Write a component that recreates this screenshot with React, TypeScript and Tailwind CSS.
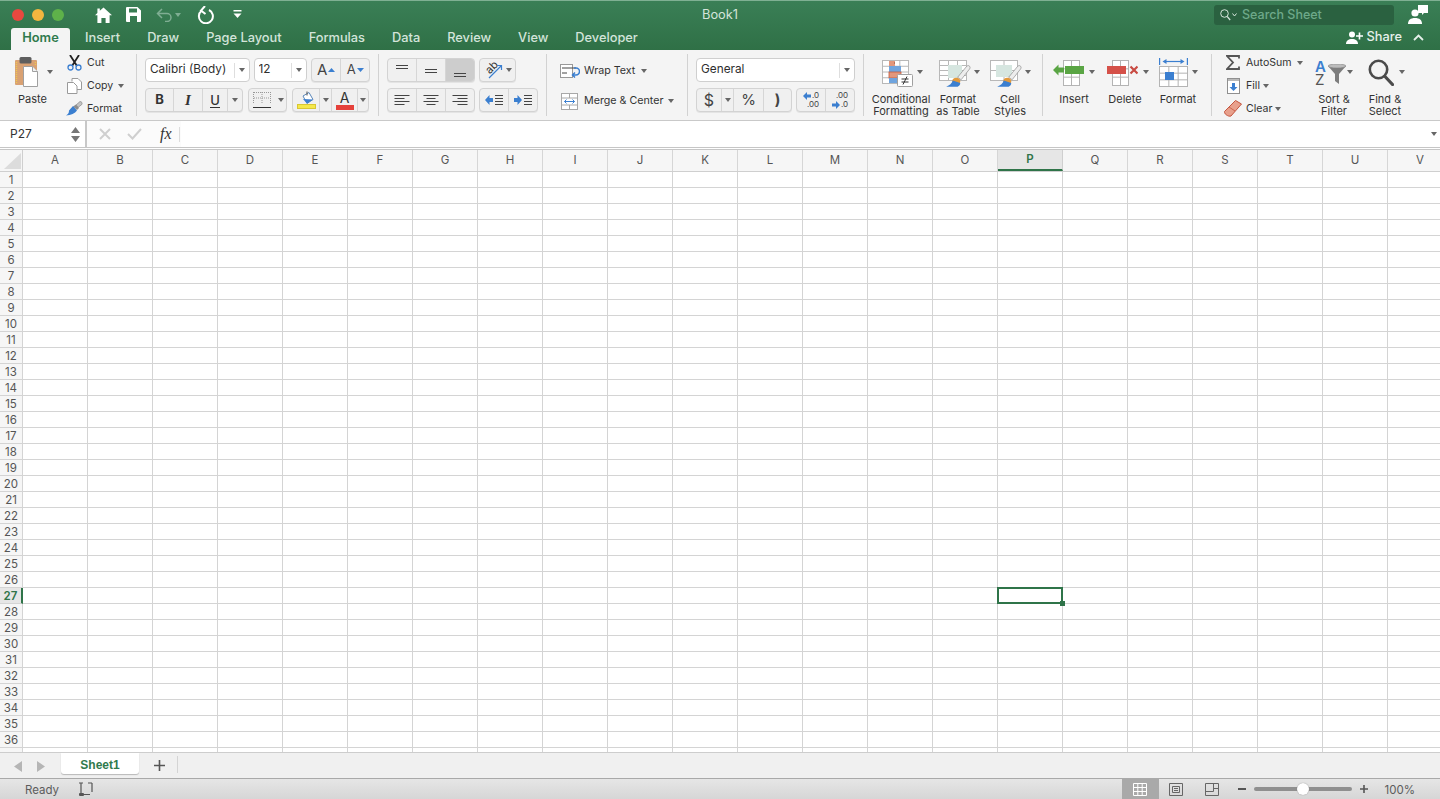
import type { ReactNode } from 'react';

const COLS = 'ABCDEFGHIJKLMNOPQRSTUV'.split('');
const ROWS = Array.from({ length: 37 }, (_, i) => i + 1);
const TABS = ['Insert', 'Draw', 'Page Layout', 'Formulas', 'Data', 'Review', 'View', 'Developer'];
const BLUE = '#3b7fd0';

function Caret({ className = '', color = '#666' }: { className?: string; color?: string }) {
  return (
    <svg className={`shrink-0 ${className}`} width="6" height="4" viewBox="0 0 6 4">
      <path d="M0 0h6L3 4z" fill={color} />
    </svg>
  );
}

function Sep() {
  return <div className="mt-1 h-[62px] w-px shrink-0 bg-[#d2d2d2]" />;
}

function Seg({ children, className = '' }: { children: ReactNode; className?: string }) {
  return (
    <div className={`flex h-6 items-stretch overflow-hidden rounded-[4px] border border-[#d3d3d3] bg-[#f0f0f0] shadow-[0_1px_0_#e4e4e4] divide-x divide-[#d6d6d6] ${className}`}>
      {children}
    </div>
  );
}

function Cell({ children, className = '' }: { children?: ReactNode; className?: string }) {
  return <div className={`flex items-center justify-center ${className}`}>{children}</div>;
}

function Select({ label, className = '' }: { label: string; className?: string }) {
  return (
    <div className={`flex h-6 items-center rounded-[4px] border border-[#cfcfcf] bg-white pl-[4px] text-[11.800px] text-[#2e2e2e] ${className}`}>
      <span className="mb-px flex-1 truncate">{label}</span>
      <span className="h-[15px] w-px bg-[#dedede]" />
      <Caret className="mx-[4px]" />
    </div>
  );
}

function BigButton({ icon, iconClass = '', lines, className = '' }: { icon: ReactNode; iconClass?: string; lines: string[]; className?: string }) {
  return (
    <div className={`flex shrink-0 flex-col items-center pt-[6px] text-[11px] leading-[12px] text-[#333] ${className}`}>
      <div className="flex h-[37px] items-start justify-center gap-[3px]">
        <div className={iconClass}>{icon}</div>
        <Caret className="mt-[14px]" />
      </div>
      {lines.map((l) => (
        <span key={l} className="whitespace-nowrap">{l}</span>
      ))}
    </div>
  );
}

function SmallRow({ icon, label, caretClass }: { icon: ReactNode; label: string; caretClass?: string }) {
  return (
    <div className="flex h-[23px] items-center text-[10.600px] text-[#333]">
      <span className="flex w-[20px] shrink-0 justify-center">{icon}</span>
      <span className="ml-[3px] whitespace-nowrap">{label}</span>
      {caretClass && <Caret className={caretClass} />}
    </div>
  );
}

function LinesIcon({ align }: { align: 'l' | 'c' | 'r' }) {
  return (
    <svg width="16" height="14" viewBox="0 0 16 14">
      {[2, 5, 8, 11].map((y, i) => {
        const w = i % 2 === 0 ? 15 : align === 'c' ? 9 : 10;
        const x = align === 'l' ? 0.5 : align === 'c' ? (16 - w) / 2 : 15.5 - w;
        return <rect key={y} x={x} y={y} width={w} height="1" fill="#444" />;
      })}
    </svg>
  );
}

function VAlign({ top }: { top: number }) {
  return (
    <svg width="14" height="16" viewBox="0 0 14 16">
      <rect x="1" y={top} width="12" height="1" fill="#444" />
      <rect x="1" y={top + 3} width="12" height="1" fill="#444" />
    </svg>
  );
}

function IndentIcon({ flip }: { flip?: boolean }) {
  return (
    <svg width="18" height="12" viewBox="0 0 18 12">
      {flip ? <path d="M0 4h3.500V1L8 6l-4.500 5V8H0z" fill={BLUE} /> : <path d="M8 4H4.500V1L0 6l4.500 5V8H8z" fill={BLUE} />}
      {[1, 4, 7, 10].map((y) => (
        <rect key={y} x="10" y={y} width="8" height="1" fill="#444" />
      ))}
    </svg>
  );
}

function MiniGrid({ w, h, cols, rows, stroke = '#b8b8b8', x = 0, y = 0 }: { w: number; h: number; cols: number; rows: number; stroke?: string; x?: number; y?: number }) {
  const v = Array.from({ length: cols + 1 }, (_, i) => x + 0.5 + ((w - 1) * i) / cols);
  const hz = Array.from({ length: rows + 1 }, (_, i) => y + 0.5 + ((h - 1) * i) / rows);
  return (
    <g stroke={stroke} strokeWidth="1" fill="none">
      <rect x={x + 0.5} y={y + 0.5} width={w - 1} height={h - 1} fill="#fff" />
      {v.map((p) => <path key={p} d={`M${p} ${y}v${h}`} />)}
      {hz.map((p) => <path key={p} d={`M${x} ${p}h${w}`} />)}
    </g>
  );
}

function PasteIcon() {
  return (
    <svg width="24" height="30" viewBox="0 0 24 30">
      <rect x="0" y="3" width="22" height="25" rx="1" fill="#d9a173" />
      <path d="M1.500 5v21M20.500 5v4" stroke="#efc84e" strokeWidth="1.400" strokeDasharray="1 1" />
      <rect x="4.500" y="0" width="12" height="6.500" rx="1.500" fill="#5e5e5e" />
      <path d="M8.500 9.500h9l5 5v15h-14z" fill="#fff" stroke="#a0a0a0" />
      <path d="M17.500 9.500v5h5" fill="#f2f2f2" stroke="#a0a0a0" />
    </svg>
  );
}

function ScissorsIcon() {
  return (
    <svg width="15" height="16" viewBox="0 0 15 16">
      <path d="M3 0l7 11M12 0L5 11" stroke="#222" strokeWidth="1.800" />
      <circle cx="3.500" cy="12.500" r="2.500" fill="none" stroke={BLUE} strokeWidth="1.300" />
      <circle cx="11.500" cy="12.500" r="2.500" fill="none" stroke={BLUE} strokeWidth="1.300" />
    </svg>
  );
}

function CopyIcon() {
  return (
    <svg width="15" height="16" viewBox="0 0 15 16">
      <path d="M5 3.500V.5h6l3.500 3.500v7.500H10" fill="#fff" stroke="#9a9a9a" />
      <path d="M.5 4.500h6L10 8v7.500H.5z" fill="#fff" stroke="#9a9a9a" />
    </svg>
  );
}

function FormatPainterIcon() {
  return (
    <svg width="17" height="15" viewBox="0 0 17 15">
      <path d="M14 .5c1.800.2 2.600 1.500 1.800 3L12 6.500 9.500 4.500z" fill="#c4c4c4" stroke="#777" strokeWidth=".6" />
      <path d="M10 3.500l3 3.500-2 2L7 5.500z" fill="#8d8d8d" />
      <path d="M7 5L11 9.500c-2 3-6 4.800-11 5 2-1.200 3-2.500 3-5z" fill={BLUE} />
    </svg>
  );
}

function CondIcon() {
  return (
    <svg width="31" height="27" viewBox="0 0 31 27">
      <MiniGrid w={27} h={24} cols={3} rows={4} />
      <rect x="7" y="1" width="6" height="5" fill="#e2977c" />
      <path d="M12 3h1" stroke="#8a4a35" />
      <rect x="7" y="6" width="12" height="6" fill="#6fa4de" />
      <rect x="7" y="12" width="12" height="6" fill="#e2977c" stroke="#c25a3d" strokeWidth=".8" />
      <rect x="7" y="18" width="8" height="5" fill="#6fa4de" />
      <rect x="15.500" y="14.500" width="15" height="12" rx="1" fill="#fff" stroke="#a0a0a0" />
      <path d="M19.500 19h7M19.500 22h7M25 16.500l-4 8" stroke="#333" strokeWidth="1" fill="none" />
    </svg>
  );
}

function TableBrushIcon({ dots }: { dots?: boolean }) {
  return (
    <svg width="32" height="27" viewBox="0 0 32 27">
      <MiniGrid w={28} h={21} cols={dots ? 2 : 3} rows={dots ? 2 : 4} />
      <rect x={dots ? 6 : 9} y="5" width={dots ? 16 : 14} height={dots ? 12 : 13} fill="#d6e6e0" />
      <g transform="translate(1 5) scale(.88 .82)">
        <path d="M33 1c1.500 1 1.500 2.500 .5 4L24 18l-4-3L30 2c1-1.200 2-1.600 3-1z" fill="#ededed" stroke="#8a8a8a" strokeWidth=".8" />
        <circle cx="18.500" cy="20" r="4.500" fill="#e39a3c" />
        <path d="M14.500 19c-1 3.500-3.500 6-7.500 7.500h13c2-1 3-2.500 3-4.500z" fill={BLUE} />
      </g>
    </svg>
  );
}

function InsertIcon() {
  return (
    <svg width="31" height="26" viewBox="0 0 31 26">
      <MiniGrid x={10} y={0} w={17} h={26} cols={2} rows={3} stroke="#b4b4b4" />
      <rect x="12" y="6" width="19" height="8" fill="#5aa544" />
      <path d="M0 10l5.500-5.500v3H11v5H5.500v3z" fill="#5aa544" />
    </svg>
  );
}

function DeleteIcon() {
  return (
    <svg width="31" height="26" viewBox="0 0 31 26">
      <MiniGrid x={5} y={0} w={17} h={26} cols={2} rows={3} stroke="#b4b4b4" />
      <rect x="0" y="6" width="19" height="8" fill="#d55149" />
      <path d="M23.500 6.500l7 7M30.500 6.500l-7 7" stroke="#c84a42" strokeWidth="2.200" />
    </svg>
  );
}

function FormatCellIcon() {
  return (
    <svg width="29" height="29" viewBox="0 0 29 29">
      <path d="M.5 0v7M28.500 0v7" stroke={BLUE} strokeWidth="1.400" />
      <path d="M6 3.500h17" stroke={BLUE} strokeWidth="1.200" />
      <path d="M3.500 3.500L7.500 1v5zM25.500 3.500L21.500 1v5z" fill={BLUE} />
      <MiniGrid y={8} w={29} h={21} cols={3} rows={3} stroke="#b4b4b4" />
      <rect x="6" y="14" width="9" height="8" fill={BLUE} />
    </svg>
  );
}

function FillIcon() {
  return (
    <svg width="13" height="16" viewBox="0 0 13 16">
      <rect x=".5" y=".5" width="12" height="15" fill="#fff" stroke="#8f8f8f" />
      <rect x="1" y="1" width="11" height="2" fill="#b9b9b9" />
      <path d="M5 5h3v4h2.500l-4 4-4-4H5z" fill={BLUE} />
    </svg>
  );
}

function EraserIcon() {
  return (
    <svg width="18" height="17" viewBox="0 0 18 17">
      <path d="M11.500.5L17.500 4 7 16c-1.500.5-3 0-4.500-1s-2.200-2.500-2-3.500z" fill="#e8a08c" stroke="#c4553f" />
      <path d="M5 7l6 4" stroke="#c4553f" strokeWidth=".8" />
    </svg>
  );
}

function SortFilterIcon() {
  return (
    <div className="relative h-[25px] w-[31px]">
      <svg className="absolute left-[13px] top-[3px]" width="18" height="20" viewBox="0 0 18 20">
        <path d="M0 2h18l-7 8v10l-4-3v-7z" fill="#7d7d7d" />
        <ellipse cx="9" cy="2" rx="9" ry="2" fill="#bcbcbc" stroke="#808080" strokeWidth=".6" />
      </svg>
      <span className="absolute left-0 top-0 text-[15px] font-semibold leading-[12px] text-[#3b7fd0]">A</span>
      <span className="absolute left-0 top-[13px] text-[15px] leading-[12px] text-[#555]">Z</span>
    </div>
  );
}

function GlassIcon() {
  return (
    <svg width="26" height="27" viewBox="0 0 26 27">
      <circle cx="10.500" cy="10.500" r="8.700" fill="none" stroke="#4b4b4b" strokeWidth="2.600" />
      <path d="M17 17.500l7.500 8" stroke="#4b4b4b" strokeWidth="3.200" strokeLinecap="round" />
    </svg>
  );
}

function TitleBar() {
  return (
    <div className="grid h-[27px] grid-cols-[1fr_auto_1fr] items-center">
      <div className="flex items-center">
        <span className="ml-3 h-3 w-3 rounded-full bg-[#e8483f]" />
        <span className="ml-2 h-3 w-3 rounded-full bg-[#f4b63f]" />
        <span className="ml-2 h-3 w-3 rounded-full bg-[#5eb14a]" />
        <svg className="ml-[31px]" width="17" height="16" viewBox="0 0 17 16">
          <path d="M8.500 .5L17 8.200h-2.400V16H10.600v-5H6.400v5H2.400V8.200H0L2.400 6V1.500h2.400v2.300z" fill="#fff" />
        </svg>
        <svg className="ml-[14px]" width="15" height="15" viewBox="0 0 15 15">
          <path fillRule="evenodd" d="M1 0h10.500L15 3.500V14a1 1 0 0 1-1 1H1a1 1 0 0 1-1-1V1a1 1 0 0 1 1-1zm2 1.500v4h8v-4zm1 7.500v6h7V9z" fill="#fff" />
        </svg>
        <svg className="ml-[15px]" width="17" height="14" viewBox="0 0 17 14">
          <path d="M6 1L1.500 5.500 6 10M2 5.500h9a4 4 0 0 1 0 8H9" fill="none" stroke="#7fae93" strokeWidth="1.500" />
        </svg>
        <Caret className="ml-[2px]" color="#7fae93" />
        <svg className="ml-[15px]" width="18" height="18" viewBox="0 0 18 18">
          <path d="M5.500 4.800A7 7 0 1 0 13 4M9 0L5 4.500l4.500 3.500" fill="none" stroke="#fff" strokeWidth="2" />
        </svg>
        <svg className="ml-[19px]" width="9" height="9" viewBox="0 0 9 9">
          <rect x=".5" y="0" width="8" height="1.500" fill="#fff" />
          <path d="M.5 3.500h8L4.500 8z" fill="#fff" />
        </svg>
      </div>
      <span className="text-[12.800px] text-[#d3e4da]">Book1</span>
      <div className="flex items-center justify-end">
        <div className="flex h-[20px] w-[180px] items-center rounded-[3px] bg-[#2a6140] pl-[6px] text-[12.500px] font-medium text-[#6ea98a]">
          <svg width="11" height="12" viewBox="0 0 11 12">
            <circle cx="4.500" cy="4.500" r="3.800" fill="none" stroke="#d5e5db" strokeWidth="1" />
            <path d="M7.200 7.500l3 3.500" stroke="#d5e5db" strokeWidth="1.200" />
          </svg>
          <svg className="ml-[1px]" width="5" height="4" viewBox="0 0 5 4">
            <path d="M.5.500L2.500 3l2-2.500" fill="none" stroke="#d5e5db" />
          </svg>
          <span className="ml-[5px] pt-[2px]">Search Sheet</span>
        </div>
        <svg className="ml-[14px] mr-[12px]" width="20" height="20" viewBox="0 0 20 20">
          <path d="M10 0h10v8h-4l-2 2V8h-4z" fill="#fff" />
          <circle cx="7" cy="8" r="3.600" fill="#fff" />
          <path d="M0 19c0-4 2.500-6 7-6s7 2 7 6z" fill="#fff" />
        </svg>
      </div>
    </div>
  );
}

function TabRow() {
  return (
    <div className="flex h-[22px] items-stretch text-[12.800px] font-medium text-[#d3e4da]">
      <div className="ml-[11px] flex w-[59px] items-center justify-center rounded-t-[3px] bg-[#f4f4f4] pb-[3px] font-semibold text-[#2f7a4d]">Home</div>
      <div className="ml-[15px] flex items-center gap-[27px] pb-[3px]">
        {TABS.map((t) => <span key={t}>{t}</span>)}
      </div>
      <div className="ml-auto mr-[16px] flex items-center pb-[4px]">
        <svg width="17" height="13" viewBox="0 0 17 13">
          <circle cx="6" cy="3.500" r="3" fill="#fff" />
          <path d="M0 13c0-3.500 2.500-5 6-5s6 1.500 6 5z" fill="#fff" />
          <path d="M13.500 1.500v7M10 5h7" stroke="#fff" strokeWidth="1.600" />
        </svg>
        <span className="ml-[4px] text-[#e6f0ea]">Share</span>
        <svg className="ml-[11px]" width="11" height="7" viewBox="0 0 11 7">
          <path d="M1 6l4.500-4.500L10 6" fill="none" stroke="#e6f0ea" strokeWidth="1.800" />
        </svg>
      </div>
    </div>
  );
}

function ClipboardGroup() {
  return (
    <div className="flex w-[136px] shrink-0">
      <div className="ml-[15px] flex w-[40px] shrink-0 flex-col pt-[7px] text-[11px] leading-[12px] text-[#333]">
        <div className="flex h-[36px] items-start">
          <PasteIcon />
          <Caret className="ml-[8px] mt-[13px]" />
        </div>
        <span className="ml-[3px]">Paste</span>
      </div>
      <div className="ml-[9px] flex flex-col pt-[1px]">
        <SmallRow icon={<ScissorsIcon />} label="Cut" />
        <SmallRow icon={<CopyIcon />} label="Copy" caretClass="ml-[5px]" />
        <SmallRow icon={<FormatPainterIcon />} label="Format" />
      </div>
    </div>
  );
}

function FontGroup() {
  return (
    <div className="ml-2 flex w-[225px] shrink-0 flex-col gap-[6px] pt-2">
      <div className="flex">
        <Select label="Calibri (Body)" className="w-[105px]" />
        <Select label="12" className="ml-[4px] w-[54px]" />
        <Seg className="ml-[4px] w-[59px]">
          <Cell className="w-[29px] gap-px text-[15px] text-[#444]">
            A<svg width="7" height="4" viewBox="0 0 7 4"><path d="M3.500 0L7 4H0z" fill={BLUE} /></svg>
          </Cell>
          <Cell className="flex-1 gap-px text-[13px] text-[#444]">
            A<svg width="7" height="4" viewBox="0 0 7 4"><path d="M0 0h7L3.500 4z" fill={BLUE} /></svg>
          </Cell>
        </Seg>
      </div>
      <div className="flex">
        <Seg className="w-[98px] text-[13px] text-[#333]">
          <Cell className="w-[28px] font-bold">B</Cell>
          <Cell className="w-[29px] font-['Liberation_Serif',serif] text-[15px] font-bold italic">I</Cell>
          <Cell className="w-[25px]"><span className="border-b border-[#333] font-medium leading-[14px]">U</span></Cell>
          <Cell className="flex-1"><Caret /></Cell>
        </Seg>
        <Seg className="ml-[5px] w-[39px] divide-x-0">
          <Cell className="w-[26px]">
            <svg width="18" height="18" viewBox="0 0 18 18">
              <path d="M.5 1v11M9 1v11M17.500 1v11M1 1.500h16M1 7h16" stroke="#999" strokeDasharray="1 1" fill="none" />
              <rect x="0" y="16" width="18" height="1" fill="#333" />
            </svg>
          </Cell>
          <Cell className="flex-1"><Caret /></Cell>
        </Seg>
        <Seg className="ml-[5px] w-[77px]">
          <Cell className="w-[27px]">
            <svg width="19" height="18" viewBox="0 0 19 18">
              <path d="M6 5l6-3.500 4 7-6 4z" fill="#fff" stroke="#5a86b8" />
              <path d="M6 8l10 .500-6 4z" fill={BLUE} />
              <path d="M10 .5v4" stroke="#555" />
              <rect x=".5" y="13.500" width="18" height="4" fill="#f5e84a" stroke="#d9c733" />
            </svg>
          </Cell>
          <Cell className="w-[12px]"><Caret /></Cell>
          <Cell className="w-[26px]">
            <div className="flex flex-col items-center text-[14px] leading-[13px] text-[#333]">
              A
              <span className="mt-[1px] h-[5px] w-[18px] bg-[#e5403a]" />
            </div>
          </Cell>
          <Cell className="flex-1"><Caret /></Cell>
        </Seg>
      </div>
    </div>
  );
}

function AlignGroup() {
  return (
    <div className="ml-2 flex w-[151px] shrink-0 flex-col gap-[6px] pt-2">
      <div className="flex">
        <Seg className="w-[88px]">
          <Cell className="w-[29px]"><VAlign top={3} /></Cell>
          <Cell className="w-[29px]"><VAlign top={7} /></Cell>
          <Cell className="flex-1 bg-[#cdcdcd]"><VAlign top={11} /></Cell>
        </Seg>
        <Seg className="ml-[4px] w-[37px] divide-x-0">
          <Cell className="flex-1 gap-[2px]">
            <div className="relative h-[20px] w-[20px]">
              <span className="absolute left-[1px] top-[1px] -rotate-45 text-[11px] leading-[12px] text-[#333]">ab</span>
              <svg className="absolute left-0 top-0" width="20" height="20" viewBox="0 0 20 20">
                <path d="M5 18L17 6M13 5.500h4.500V10" stroke={BLUE} strokeWidth="1.200" fill="none" />
              </svg>
            </div>
            <Caret />
          </Cell>
        </Seg>
      </div>
      <div className="flex">
        <Seg className="w-[88px]">
          <Cell className="w-[29px]"><LinesIcon align="l" /></Cell>
          <Cell className="w-[29px]"><LinesIcon align="c" /></Cell>
          <Cell className="flex-1"><LinesIcon align="r" /></Cell>
        </Seg>
        <Seg className="ml-[4px] w-[59px]">
          <Cell className="w-[29px]"><IndentIcon /></Cell>
          <Cell className="flex-1"><IndentIcon flip /></Cell>
        </Seg>
      </div>
    </div>
  );
}

function WrapGroup() {
  return (
    <div className="flex w-[140px] shrink-0 flex-col pl-[13px] pt-[10px] text-[10.700px] text-[#333]">
      <div className="flex h-[22px] items-center">
        <svg width="20" height="14" viewBox="0 0 20 14">
          <rect x=".5" y=".5" width="12" height="13" fill="#fff" stroke="#999" />
          <path d="M2 4h14M2 9h5" stroke="#444" />
          <path d="M14 4h2a3 3 0 0 1 0 7h-3M15 8.500L12.500 11l2.500 2.500" stroke={BLUE} strokeWidth="1.500" fill="none" />
        </svg>
        <span className="ml-[4px]">Wrap Text</span>
        <Caret className="ml-[6px]" />
      </div>
      <div className="mt-2 flex h-[22px] items-center">
        <svg className="ml-[1px]" width="18" height="17" viewBox="0 0 18 17">
          <rect x=".5" y=".5" width="16" height="16" fill="#fff" stroke="#a8a8a8" />
          <path d="M0 5h17M0 12h17M8.500 0v5M8.500 12v5" stroke="#a8a8a8" />
          <path d="M3.500 8.500h10M5.500 6.500l-2 2 2 2M11.500 6.500l2 2-2 2" stroke={BLUE} fill="none" />
        </svg>
        <span className="ml-[5px]">Merge &amp; Center</span>
        <Caret className="ml-[5px]" />
      </div>
    </div>
  );
}

function NumberGroup() {
  return (
    <div className="ml-2 flex w-[159px] shrink-0 flex-col gap-[6px] pt-2">
      <Select label="General" className="w-[159px]" />
      <div className="flex">
        <Seg className="w-[96px] text-[#444]">
          <Cell className="w-[25px] text-[16px]">$</Cell>
          <Cell className="w-[12px]"><Caret /></Cell>
          <Cell className="w-[30px] text-[15px]">%</Cell>
          <Cell className="flex-1 text-[15px] font-bold">)</Cell>
        </Seg>
        <Seg className="ml-[4px] w-[59px] text-[8px] leading-[9px] text-[#444]">
          <Cell className="w-[29px]">
            <div className="flex flex-col items-end">
              <span className="flex items-center">
                <svg className="mr-px" width="8" height="8" viewBox="0 0 8 8"><path d="M0 4l4-4v2.500h4v3H4V8z" fill={BLUE} /></svg>
                .0
              </span>
              <span>.00</span>
            </div>
          </Cell>
          <Cell className="flex-1">
            <div className="flex flex-col items-end">
              <span>.00</span>
              <span className="flex items-center">
                <svg className="mr-px" width="8" height="8" viewBox="0 0 8 8"><path d="M8 4L4 0v2.500H0v3h4V8z" fill={BLUE} /></svg>
                .0
              </span>
            </div>
          </Cell>
        </Seg>
      </div>
    </div>
  );
}

function StylesGroup() {
  return (
    <div className="flex w-[178px] shrink-0">
      <BigButton icon={<CondIcon />} iconClass="ml-[3px] mr-[1px] mt-[4px]" lines={['Conditional', 'Formatting']} className="ml-[7px] w-[60px]" />
      <BigButton icon={<TableBrushIcon />} iconClass="ml-[3px] mt-[4px]" lines={['Format', 'as Table']} className="ml-[3px] w-[48px]" />
      <BigButton icon={<TableBrushIcon dots />} iconClass="mt-[4px]" lines={['Cell', 'Styles']} className="ml-[6px] w-[44px]" />
    </div>
  );
}

function CellsGroup() {
  return (
    <div className="flex w-[168px] shrink-0">
      <BigButton icon={<InsertIcon />} iconClass="mr-[2px] mt-[4px]" lines={['Insert']} className="ml-[6px] w-[50px]" />
      <BigButton icon={<DeleteIcon />} iconClass="ml-[6px] mr-[2px] mt-[4px]" lines={['Delete']} className="ml-[1px] w-[50px]" />
      <BigButton icon={<FormatCellIcon />} iconClass="mr-[1px] mt-[2px]" lines={['Format']} className="ml-[3px] w-[50px]" />
    </div>
  );
}

function EditGroup() {
  return (
    <div className="flex">
      <div className="ml-[11px] flex w-[86px] shrink-0 flex-col pt-[1px]">
        <SmallRow
          icon={<svg width="14" height="15" viewBox="0 0 14 15"><path d="M13 3.500V1H1l6 6.500L1 14h12v-2.500" fill="none" stroke="#555" strokeWidth="1.800" /></svg>}
          label="AutoSum"
          caretClass="ml-[5px]"
        />
        <SmallRow icon={<FillIcon />} label="Fill" caretClass="ml-[3px]" />
        <SmallRow icon={<EraserIcon />} label="Clear" caretClass="ml-[2px]" />
      </div>
      <BigButton icon={<SortFilterIcon />} iconClass="-mr-[2px] mt-[5px]" lines={['Sort &', 'Filter']} className="w-[50px]" />
      <BigButton icon={<GlassIcon />} iconClass="ml-[3px] mr-[2px] mt-[3px]" lines={['Find &', 'Select']} className="ml-[1px] w-[50px]" />
    </div>
  );
}

function Ribbon() {
  return (
    <div className="flex h-[71px] border-b border-[#c9c9c9] bg-[#f4f4f4]">
      <ClipboardGroup />
      <Sep />
      <FontGroup />
      <div className="ml-2"><Sep /></div>
      <AlignGroup />
      <div className="ml-2"><Sep /></div>
      <WrapGroup />
      <Sep />
      <NumberGroup />
      <div className="ml-2"><Sep /></div>
      <StylesGroup />
      <Sep />
      <CellsGroup />
      <Sep />
      <EditGroup />
    </div>
  );
}

function FormulaBar() {
  return (
    <div className="flex h-[29px] border-b-[3px] border-double border-[#c6c6c6] bg-white">
      <div className="flex w-[85px] items-center justify-between pl-[10px] pr-[5px] text-[12px] text-[#333]">
        P27
        <svg width="9" height="15" viewBox="0 0 9 15">
          <path d="M4.500 0L9 6H0zM0 9h9l-4.500 6z" fill="#777" />
        </svg>
      </div>
      <div className="w-[2px] bg-[#c8c8c8]" />
      <div className="flex w-[94px] items-center bg-[#fbfbfb]">
        <svg className="ml-[12px]" width="12" height="12" viewBox="0 0 12 12">
          <path d="M1 1l10 10M11 1L1 11" stroke="#cfcfcf" strokeWidth="2" />
        </svg>
        <svg className="ml-[16px]" width="15" height="12" viewBox="0 0 15 12">
          <path d="M1 6l4.500 4.500L14 1" fill="none" stroke="#cfcfcf" strokeWidth="2" />
        </svg>
        <span className="ml-[18px] font-['Liberation_Serif',serif] text-[16px] italic leading-none text-[#333]">fx</span>
        <span className="ml-[7px] h-[15px] w-px bg-[#dcdcdc]" />
      </div>
      <div className="flex flex-1 items-center justify-end pr-[3px]">
        <Caret color="#666" />
      </div>
    </div>
  );
}

function Sheet() {
  return (
    <div className="flex-1 overflow-hidden bg-white text-[11.500px] text-[#555]">
      <div className="flex h-[22px] border-b border-[#cfcfcf] bg-[#f6f6f6]">
        <div className="w-[23px] shrink-0 border-r border-[#cfcfcf] p-[2px]">
          <svg width="19" height="18" viewBox="0 0 19 18"><path d="M19 1v16H2z" fill="#dcdcdc" /></svg>
        </div>
        {COLS.map((c) => (
          <div
            key={c}
            className={
              c === 'P'
                ? 'flex w-[65px] shrink-0 items-center justify-center border-r border-b-2 border-r-[#cfcfcf] border-b-[#2f7449] bg-[#e6e6e6] pt-px font-semibold text-[#2f7449]'
                : 'flex w-[65px] shrink-0 items-center justify-center border-r border-[#d6d6d6] pt-px'
            }
          >
            {c}
          </div>
        ))}
      </div>
      {ROWS.map((r) => (
        <div key={r} className="flex h-4">
          <div
            className={
              r === 27
                ? 'flex w-[23px] shrink-0 items-center justify-center border-r-2 border-b border-r-[#2f7449] border-b-[#d4d4d4] bg-[#e6e6e6] pt-[2px] font-semibold text-[#2f7449]'
                : 'flex w-[23px] shrink-0 items-center justify-center border-r border-b border-[#d4d4d4] bg-[#f6f6f6] pt-[2px]'
            }
          >
            {r <= 36 ? r : ''}
          </div>
          {COLS.map((c) => (
            <div key={c} className="relative w-[65px] shrink-0 border-r border-b border-[#d4d4d4]">
              {r === 27 && c === 'P' && (
                <div className="absolute -left-px -top-px z-10 h-[17px] w-[66px] border-2 border-[#2f7449]">
                  <span className="absolute -bottom-[4px] -right-[4px] h-[5px] w-[5px] bg-[#2f7449]" />
                </div>
              )}
            </div>
          ))}
        </div>
      ))}
    </div>
  );
}

function SheetTabs() {
  return (
    <div className="flex h-[26px] border-t border-[#cdcdcd] bg-[#f0f0f0]">
      <svg className="ml-[14px] mt-[8px]" width="8" height="11" viewBox="0 0 8 11"><path d="M8 0v11L0 5.500z" fill="#b5b5b5" /></svg>
      <svg className="ml-[15px] mt-[8px]" width="8" height="11" viewBox="0 0 8 11"><path d="M0 0v11l8-5.500z" fill="#b5b5b5" /></svg>
      <div className="ml-[16px] flex h-[21px] w-[78px] items-center justify-center rounded-b-[3px] bg-white pt-[3px] font-['Liberation_Sans',sans-serif] text-[12px] font-bold text-[#2f7a4d] shadow-[0_1px_1px_#b8b8b8]">
        Sheet1
      </div>
      <svg className="ml-[15px] mt-[7px]" width="11" height="11" viewBox="0 0 11 11">
        <path d="M5.500 0v11M0 5.500h11" stroke="#555" strokeWidth="1.600" />
      </svg>
      <div className="ml-[12px] mt-[3px] h-[17px] w-px bg-[#d4d4d4]" />
    </div>
  );
}

function StatusBar() {
  return (
    <div className="flex h-[21px] items-center border-t border-[#a9a9a9] bg-gradient-to-b from-[#e6e6e6] to-[#d6d6d6] text-[11.500px] text-[#5c5c5c]">
      <span className="ml-[25px] pt-[3px]">Ready</span>
      <svg className="ml-[19px]" width="15" height="15" viewBox="0 0 15 15">
        <path d="M1 1h4M3 1v11M14 1h-4M14 1v9" fill="none" stroke="#555" strokeWidth="1.200" />
        <rect x="1" y="11" width="5" height="3" rx="1" fill="#555" />
        <path d="M6 12.500h6" stroke="#555" />
      </svg>
      <div className="ml-auto flex h-full w-[37px] items-center justify-center bg-[#a9a9a9]">
        <svg width="14" height="13" viewBox="0 0 14 13">
          <path d="M.5.500h13v12H.5zM.5 4.500h13M.5 8.500h13M4.800.5v12M9.200.5v12" fill="none" stroke="#fff" />
        </svg>
      </div>
      <svg className="ml-[10px]" width="14" height="13" viewBox="0 0 14 13">
        <path d="M.5.500h13v12H.5z" fill="none" stroke="#666" />
        <path d="M3.500 3.500h7v6h-7zM5 5.500h4M5 7.500h4" fill="none" stroke="#666" />
      </svg>
      <svg className="ml-[22px]" width="14" height="13" viewBox="0 0 14 13">
        <path d="M.5.500h13v12H.5zM.5 8.500h8v-8M8.500 5.500h5" fill="none" stroke="#666" />
      </svg>
      <span className="ml-[19px] h-[2px] w-[8px] bg-[#555]" />
      <div className="relative ml-[8px] h-[4px] w-[98px] rounded-full bg-[#8f8f8f]">
        <span className="absolute left-[43px] top-[-4px] h-3 w-3 rounded-full bg-white shadow-[0_0_1px_#777]" />
      </div>
      <svg className="ml-[8px]" width="8" height="8" viewBox="0 0 8 8"><path d="M4 0v8M0 4h8" stroke="#555" strokeWidth="1.600" /></svg>
      <span className="ml-[17px] mr-[25px] pt-[3px]">100%</span>
    </div>
  );
}

export default function App() {
  return (
    <div className="flex h-[799px] w-[1440px] flex-col overflow-hidden font-[Inter,sans-serif]">
      <div className="border-t border-[#7fb093] bg-gradient-to-b from-[#3a7f56] to-[#2f7046]">
        <TitleBar />
        <TabRow />
      </div>
      <Ribbon />
      <FormulaBar />
      <Sheet />
      <SheetTabs />
      <StatusBar />
    </div>
  );
}
